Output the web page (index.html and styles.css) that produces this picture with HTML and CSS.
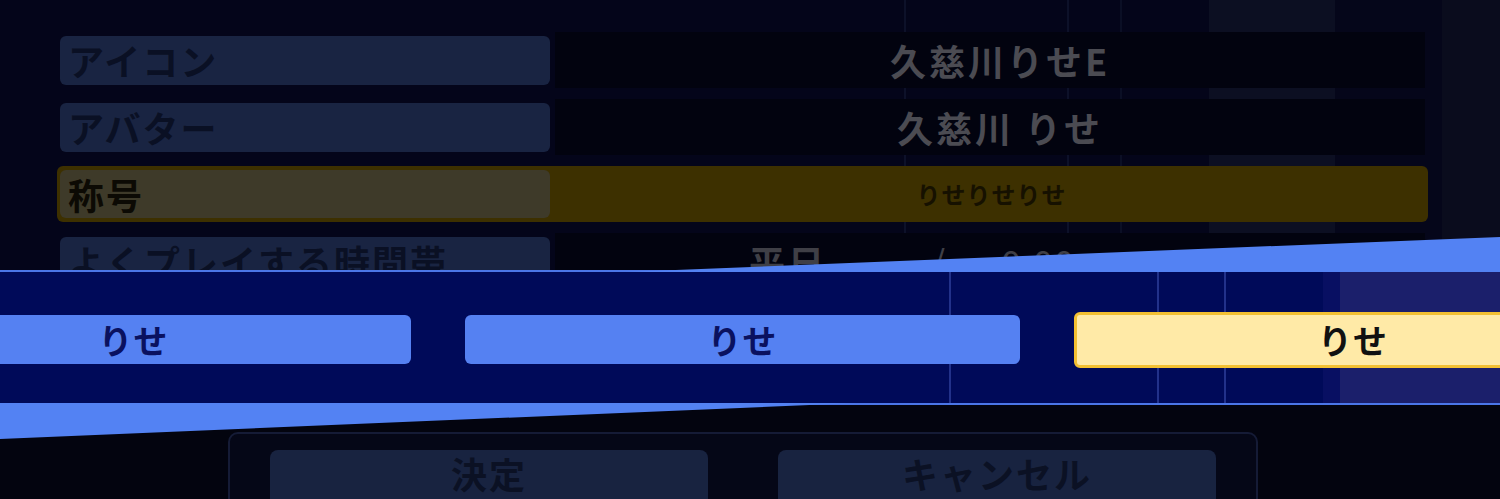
FILE: index.html
```html
<!DOCTYPE html>
<html lang="ja">
<head>
<meta charset="utf-8">
<title>プロフィール設定</title>
<link rel="stylesheet" href="styles.css">
</head>
<body>
<div class="screen">
  <div class="form">
    <div class="row">
      <div class="label">アイコン</div>
      <div class="value">久慈川りせE</div>
    </div>
    <div class="row">
      <div class="label">アバター</div>
      <div class="value">久慈川 りせ</div>
    </div>
    <div class="row selected">
      <div class="label">称号</div>
      <div class="value">りせりせりせ</div>
    </div>
    <div class="row">
      <div class="label">よくプレイする時間帯</div>
      <div class="value time">
        <span class="t-day">平日</span>
        <span class="t-sep">/</span>
        <span class="t-from">0:00</span>
        <span class="t-tilde">~</span>
        <span class="t-to">0:00</span>
      </div>
    </div>
  </div>

  <div class="panel">
    <div class="panel-btn">決定</div>
    <div class="panel-btn">キャンセル</div>
  </div>

  <div class="band">
    <div class="choices">
      <div class="choice">りせ</div>
      <div class="choice">りせ</div>
      <div class="choice active">りせ</div>
    </div>
  </div>
</div>
</body>
</html>
```

FILE: styles.css
```css
html, body {
  margin: 0;
  padding: 0;
}

body {
  width: 1500px;
  height: 499px;
  overflow: hidden;
  background: #04051a;
  font-family: "Noto Sans CJK JP", "Noto Sans", sans-serif;
  font-weight: 700;
}

.screen {
  position: relative;
  width: 1500px;
  height: 499px;
  overflow: hidden;
  background-color: #03040f;
  background-image:
    linear-gradient(90deg, transparent 904px, #0d1129 904px, #0d1129 906px, transparent 906px),
    linear-gradient(90deg, transparent 1067px, #0d1129 1067px, #0d1129 1069px, transparent 1069px),
    linear-gradient(90deg, transparent 1120px, #0b0f25 1120px, #0b0f25 1122px, transparent 1122px),
    linear-gradient(90deg, #04051a 1209px, #0c0f22 1209px, #0c0f22 1335px, #05061a 1335px, #05061a 1442px, #0a0c1d 1442px);
  background-size: 1500px 280px;
  background-repeat: no-repeat;
}

/* ---------- form rows ---------- */
.form {
  display: flex;
  flex-direction: column;
  gap: 11px;
  padding-top: 32px;
}

.row {
  display: grid;
  grid-template-columns: 490px 1fr;
  column-gap: 5px;
  align-items: center;
  box-sizing: border-box;
  width: 1365px;
  height: 56px;
  margin-left: 60px;
}

.label {
  box-sizing: border-box;
  height: 49px;
  padding-left: 8px;
  background: #192442;
  border-radius: 6px;
  color: #0a1024;
  font-size: 36px;
  line-height: 49px;
  letter-spacing: 2px;
  white-space: nowrap;
}

.value {
  box-sizing: border-box;
  height: 56px;
  padding-left: 20px;
  background: #02030f;
  color: #4b4b52;
  font-size: 36px;
  line-height: 56px;
  letter-spacing: 3px;
  text-align: center;
  white-space: nowrap;
}

.row.selected {
  width: 1371px;
  margin-left: 57px;
  padding-left: 3px;
  background: #3d3000;
  border-radius: 6px;
}

.selected .label {
  height: 48px;
  background: #3e3a29;
  color: #0c0a04;
}

.selected .value {
  padding-left: 0;
  background: transparent;
  color: #161100;
  font-size: 24px;
  letter-spacing: 1px;
}

.value.time {
  display: flex;
  align-items: center;
  padding-left: 194px;
  text-align: left;
  color: #3f3f46;
}

.t-day { width: 182px; }
.t-sep { width: 70px; font-weight: 400; }
.t-from { width: 140px; font-weight: 400; letter-spacing: 1px; }
.t-tilde { width: 75px; font-weight: 400; }
.t-to { font-weight: 400; }

/* ---------- bottom buttons ---------- */
.panel {
  display: flex;
  gap: 70px;
  box-sizing: border-box;
  width: 1030px;
  height: 100px;
  margin-top: 143px;
  margin-left: 228px;
  padding: 16px 0 0 40px;
  background: #050717;
  border: 2px solid #151b36;
  border-radius: 10px;
}

.panel-btn {
  width: 438px;
  height: 60px;
  background: #182340;
  border-radius: 8px;
  color: #0b1124;
  font-size: 36px;
  line-height: 46px;
  letter-spacing: 2px;
  text-align: center;
}

/* ---------- overlay choice band ---------- */
.band {
  position: absolute;
  top: 270px;
  left: 0;
  width: 1500px;
  height: 131px;
  border-top: 2px solid #4b76e8;
  border-bottom: 2px solid #4b76e8;
  background:
    linear-gradient(90deg, transparent 949px, #22318a 949px, #22318a 951px, transparent 951px),
    linear-gradient(90deg, transparent 1157px, #22318a 1157px, #22318a 1159px, transparent 1159px),
    linear-gradient(90deg, transparent 1224px, #22318a 1224px, #22318a 1226px, transparent 1226px),
    linear-gradient(90deg, #000a59 1323px, #080f62 1323px, #080f62 1340px, #1b1f6b 1340px);
}

.band::before {
  content: "";
  position: absolute;
  top: -35px;
  right: 0;
  width: 875px;
  height: 35px;
  background: #5382f3;
  clip-path: polygon(0 100%, 100% 0, 100% 100%);
}

.band::after {
  content: "";
  position: absolute;
  top: 131px;
  left: 0;
  width: 857px;
  height: 36px;
  background: #5382f3;
  clip-path: polygon(0 0, 100% 0, 0 100%);
}

.choices {
  display: flex;
  align-items: center;
  gap: 54px;
  box-sizing: border-box;
  height: 131px;
  padding-top: 4px;
  margin-left: -144px;
}

.choice {
  flex: none;
  width: 555px;
  height: 49px;
  background: #5581f2;
  border-radius: 6px;
  color: #0a1160;
  font-size: 34px;
  line-height: 49px;
  letter-spacing: 1px;
  text-align: center;
}

.choice.active {
  box-sizing: border-box;
  width: 558px;
  height: 56px;
  background: #ffeaa7;
  border: 3px solid #f3c032;
  color: #111111;
  line-height: 50px;
}
```
